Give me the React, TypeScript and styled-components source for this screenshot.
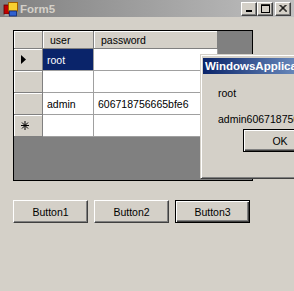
import React from "react";
import styled, { createGlobalStyle } from "styled-components";

const GlobalStyle = createGlobalStyle`
  html, body {
    margin: 0;
    padding: 0;
    overflow: hidden;
  }
  body {
    width: 294px;
    height: 291px;
    background: #d4d0c8;
    font-family: "Liberation Sans", Arial, sans-serif;
    font-size: 10.5px;
    color: #000;
  }
`;

const Window = styled.div`
  position: relative;
  width: 294px;
  height: 291px;
  overflow: hidden;
  background: #d4d0c8;
  display: flex;
  flex-direction: column;
`;

const TitleBar = styled.div<{ $active?: boolean }>`
  height: ${p => (p.$active ? 16 : 17)}px;
  flex-shrink: 0;
  display: flex;
  align-items: center;
  padding: 0 3px 0 ${p => (p.$active ? 2 : 3)}px;
  background: ${p =>
    p.$active
      ? "linear-gradient(to right, #0a246a, #a6caf0)"
      : "linear-gradient(to right, #808080, #c0c0c0)"};
`;

const Caption = styled.span<{ $active?: boolean }>`
  flex: 1;
  font-weight: bold;
  font-size: 11.5px;
  color: ${p => (p.$active ? "#fff" : "#d4d0c8")};
  white-space: nowrap;
  margin-left: ${p => (p.$active ? 0 : 1)}px;
`;

const CaptionButtons = styled.div`
  display: flex;
`;

const CaptionButton = styled.div<{ $gap?: boolean }>`
  width: 16px;
  height: 14px;
  box-sizing: border-box;
  margin-left: ${p => (p.$gap ? 2 : 0)}px;
  background: #d4d0c8;
  border: 1px solid;
  border-color: #fff #404040 #404040 #fff;
  box-shadow: inset -1px -1px #808080;
  display: flex;
  align-items: center;
  justify-content: center;
`;

const FormBody = styled.div`
  display: flex;
  flex-direction: column;
  align-items: flex-start;
  padding: 13px 0 0 13px;
`;

const Grid = styled.div`
  width: 240px;
  height: 151px;
  box-sizing: border-box;
  border: 1px solid #000;
  background: #808080;
  display: grid;
  grid-template-columns: 29px 51px 124px;
  grid-template-rows: 18px;
  grid-auto-rows: 22px;
  align-content: start;
  justify-content: start;
`;

const Cell = styled.div<{ $selected?: boolean }>`
  box-sizing: border-box;
  border-right: 1px solid #a0a0a0;
  border-bottom: 1px solid #a0a0a0;
  background: ${p => (p.$selected ? "#0a246a" : "#fff")};
  color: ${p => (p.$selected ? "#fff" : "#000")};
  display: flex;
  align-items: center;
  padding-left: 4px;
  white-space: nowrap;
  overflow: hidden;
`;

const HeadCell = styled(Cell)`
  background: #d4d0c8;
  border-color: #808080;
  box-shadow: inset 1px 1px #fff;
  padding-left: 7px;
`;

const RowHead = styled(Cell)`
  background: #d4d0c8;
  border-color: #808080;
  box-shadow: inset 1px 1px #fff;
  padding-left: 7px;
`;

const ButtonRow = styled.div`
  display: flex;
  gap: 6px;
  margin-top: 19px;
`;

const WinButton = styled.div<{ $default?: boolean }>`
  width: 75px;
  height: 23px;
  box-sizing: border-box;
  background: #d4d0c8;
  border: 1px solid;
  border-color: ${p => (p.$default ? "#000" : "#fff #404040 #404040 #fff")};
  box-shadow: ${p =>
    p.$default
      ? "inset 1px 1px #fff, inset -1px -1px #404040, inset -2px -2px #808080"
      : "inset -1px -1px #808080"};
  display: flex;
  align-items: center;
  justify-content: center;
  font-size: 10.5px;
`;

// message box lies over the form, clipped by the screenshot edge
const Dialog = styled.div`
  position: absolute;
  left: 200px;
  top: 54px;
  width: 160px;
  height: 125px;
  box-sizing: border-box;
  background: #d4d0c8;
  border: 1px solid;
  border-color: #d4d0c8 #404040 #404040 #d4d0c8;
  box-shadow: inset 1px 1px #fff, inset -1px -1px #808080;
  padding: 3px 2px 2px 2px;
  display: flex;
  flex-direction: column;
`;

const DialogBody = styled.div`
  display: flex;
  flex-direction: column;
  padding: 13px 0 0 15px;
  gap: 13px;
`;

const Message = styled.div`
  line-height: 13px;
  white-space: nowrap;
`;

const DialogButtons = styled.div`
  display: flex;
  justify-content: center;
  margin-top: 3px;
`;

function FormIcon() {
  return (
    <svg width="16" height="16" viewBox="0 0 16 16">
      <rect x="1" y="4" width="5" height="9" fill="#c00000" stroke="#600000" strokeWidth="0.8" />
      <rect x="5.5" y="1.5" width="9" height="8.5" fill="#f8d030" stroke="#a06000" strokeWidth="1" />
      <rect x="6.5" y="10" width="7" height="5" fill="#3060d0" stroke="#102870" strokeWidth="0.8" />
      <rect x="1.5" y="13" width="4" height="2" fill="#a0a0a0" />
    </svg>
  );
}

function MinGlyph() {
  return (
    <svg width="8" height="8" viewBox="0 0 8 8">
      <rect x="1" y="5" width="6" height="2" fill="#000" />
    </svg>
  );
}

function MaxGlyph() {
  return (
    <svg width="9" height="9" viewBox="0 0 9 9">
      <rect x="0.5" y="1" width="8" height="7.5" fill="none" stroke="#000" strokeWidth="1" />
      <rect x="0" y="0.5" width="9" height="1.5" fill="#000" />
    </svg>
  );
}

function CloseGlyph() {
  return (
    <svg width="8" height="7" viewBox="0 0 8 7">
      <path d="M0.5 0 L7.5 7 M1.5 0 L8 6.5 M7.5 0 L0.5 7 M6.5 0 L0 6.5" stroke="#000" strokeWidth="1" />
    </svg>
  );
}

function RowArrow() {
  return (
    <svg width="5" height="9" viewBox="0 0 5 9">
      <polygon points="0,0 5,4.5 0,9" fill="#000" />
    </svg>
  );
}

function NewRowStar() {
  return (
    <svg width="8" height="9" viewBox="0 0 8 9">
      <path d="M4 0 V9 M0 4.5 H8 M1 1.5 L7 7.5 M7 1.5 L1 7.5" stroke="#000" strokeWidth="1" />
    </svg>
  );
}

export default function App() {
  return (
    <Window>
      <GlobalStyle />
      <TitleBar>
        <FormIcon />
        <Caption>Form5</Caption>
        <CaptionButtons>
          <CaptionButton><MinGlyph /></CaptionButton>
          <CaptionButton><MaxGlyph /></CaptionButton>
          <CaptionButton $gap><CloseGlyph /></CaptionButton>
        </CaptionButtons>
      </TitleBar>

      <FormBody>
        <Grid>
          <HeadCell />
          <HeadCell>user</HeadCell>
          <HeadCell>password</HeadCell>

          <RowHead><RowArrow /></RowHead>
          <Cell $selected>root</Cell>
          <Cell />

          <RowHead />
          <Cell />
          <Cell />

          <RowHead />
          <Cell>admin</Cell>
          <Cell>606718756665bfe6</Cell>

          <RowHead><NewRowStar /></RowHead>
          <Cell />
          <Cell />
        </Grid>

        <ButtonRow>
          <WinButton>Button1</WinButton>
          <WinButton>Button2</WinButton>
          <WinButton $default>Button3</WinButton>
        </ButtonRow>
      </FormBody>

      <Dialog>
        <TitleBar $active>
          <Caption $active>WindowsApplication1</Caption>
          <CaptionButton><CloseGlyph /></CaptionButton>
        </TitleBar>
        <DialogBody>
          <Message>root</Message>
          <Message>admin606718756665bfe6</Message>
        </DialogBody>
        <DialogButtons>
          <WinButton $default>OK</WinButton>
        </DialogButtons>
      </Dialog>
    </Window>
  );
}
